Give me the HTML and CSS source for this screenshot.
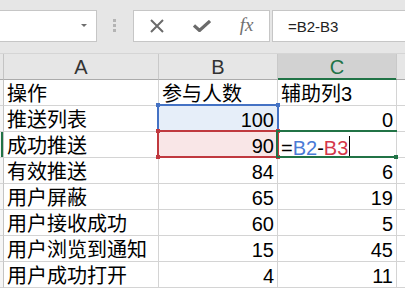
FILE: index.html
```html
<!DOCTYPE html>
<html lang="zh">
<head>
  <meta charset="UTF-8">
  <title>辅助列</title>
  <link rel="stylesheet" href="styles.css">
</head>
<body>

  <div class="bar">
    <div class="namebox"><span class="drop"></span></div>
    <div class="grip"><i></i><i></i><i></i></div>
    <div class="fxbtns">
      <span class="btn">
        <svg width="14" height="14" viewBox="0 0 14 14"><path d="M1 1L13 13M13 1L1 13" stroke="#6b6b6b" stroke-width="2" fill="none"/></svg>
      </span>
      <span class="btn">
        <svg width="18" height="12" viewBox="0 0 18 12"><path d="M1 5.5L6.5 10.5L17 1" stroke="#6b6b6b" stroke-width="3.2" fill="none"/></svg>
      </span>
      <span class="btn fx">fx</span>
    </div>
    <div class="formula">=B2-B3</div>
  </div>

  <div class="sheet">
    <div class="corner"></div>
    <div class="hd">A</div>
    <div class="hd">B</div>
    <div class="hd hd-sel">C</div>
    <div class="hd hd-end"></div>

    <div class="rh"></div>
    <div class="c">操作</div>
    <div class="c">参与人数</div>
    <div class="c">辅助列3</div>
    <div class="c end"></div>

    <div class="rh"></div>
    <div class="c">推送列表</div>
    <div class="c num fill-blue">100<span class="ref ref-blue"><i class="tl"></i><i class="tr"></i><i class="bl"></i><i class="br"></i></span></div>
    <div class="c num">0</div>
    <div class="c end"></div>

    <div class="rh rh-sel"></div>
    <div class="c">成功推送</div>
    <div class="c num fill-red">90<span class="ref ref-red"><i class="tl"></i><i class="tr"></i><i class="bl"></i><i class="br"></i></span></div>
    <div class="c editing">=<span class="r-blue">B2</span>-<span class="r-red">B3</span><span class="caret"></span><span class="act"><i></i></span></div>
    <div class="c end"></div>

    <div class="rh"></div>
    <div class="c">有效推送</div>
    <div class="c num">84</div>
    <div class="c num">6</div>
    <div class="c end"></div>

    <div class="rh"></div>
    <div class="c">用户屏蔽</div>
    <div class="c num">65</div>
    <div class="c num">19</div>
    <div class="c end"></div>

    <div class="rh"></div>
    <div class="c">用户接收成功</div>
    <div class="c num">60</div>
    <div class="c num">5</div>
    <div class="c end"></div>

    <div class="rh"></div>
    <div class="c">用户浏览到通知</div>
    <div class="c num">15</div>
    <div class="c num">45</div>
    <div class="c end"></div>

    <div class="rh"></div>
    <div class="c">用户成功打开</div>
    <div class="c num">4</div>
    <div class="c num">11</div>
    <div class="c end"></div>
  </div>

</body>
</html>
```

FILE: styles.css
```css
html, body {
  margin: 0;
  height: 289px;
  overflow: hidden;
  background: #ffffff;
}

body {
  font-family: 'Liberation Sans', 'Noto Sans CJK SC', sans-serif;
  font-size: 20px;
  color: #000;
}

/* formula bar */
.bar {
  display: flex;
  align-items: flex-start;
  height: 53px;
  padding-top: 10px;
  box-sizing: border-box;
  background: #e6e6e6;
}

.namebox {
  width: 98px;
  height: 32px;
  margin-left: -1px;
  box-sizing: border-box;
  background: #fff;
  border: 1px solid #c6c6c6;
  display: flex;
  justify-content: flex-end;
  align-items: center;
  padding-right: 9px;
  padding-bottom: 2px;
}

.drop {
  width: 0;
  height: 0;
  border-left: 3px solid transparent;
  border-right: 3px solid transparent;
  border-top: 3px solid #6e6e6e;
}

.grip {
  width: 36px;
  padding-left: 16px;
  padding-top: 9px;
  box-sizing: border-box;
  display: flex;
  flex-direction: column;
  gap: 2px;
}

.grip i {
  display: block;
  width: 3px;
  height: 3px;
  background: #b4b4b4;
}

.fxbtns {
  width: 137px;
  height: 32px;
  box-sizing: border-box;
  background: #fff;
  border: 1px solid #c6c6c6;
  display: flex;
}

.btn {
  width: 45px;
  display: flex;
  justify-content: center;
  align-items: center;
}

.btn svg {
  display: block;
}

.fx {
  font-family: 'Liberation Serif', serif;
  font-style: italic;
  font-size: 19px;
  color: #707070;
  padding-bottom: 2px;
}

.formula {
  flex: 1;
  height: 32px;
  margin-left: 2px;
  margin-right: -2px;
  box-sizing: border-box;
  background: #fff;
  border: 1px solid #c6c6c6;
  padding: 1px 0 0 15px;
  font-size: 15px;
  line-height: 29px;
  color: #222;
}

/* sheet grid */
.sheet {
  display: grid;
  grid-template-columns: 4px 155px 119px 119px 1fr;
  grid-auto-rows: 26px;
  height: 236px;
  overflow: hidden;
  border-top: 1px solid #d5d5d5;
  box-sizing: border-box;
}

.sheet > div {
  box-sizing: border-box;
}

.corner {
  background: #e6e6e6;
  border-right: 1px solid #c4c4c4;
  border-bottom: 1px solid #ababab;
}

.hd {
  background: #e6e6e6;
  border-right: 1px solid #c9c9c9;
  border-bottom: 1px solid #ababab;
  text-align: center;
  padding-top: 3px;
  line-height: 20px;
  color: #333;
}

.hd-sel {
  background: #d2d2d2;
  color: #217346;
  border-bottom-color: #217346;
  box-shadow: inset 0 -1px #217346;
}

.hd-end {
  border-right: none;
}

.rh {
  background: #f6f6f6;
  border-right: 1px solid #c4c4c4;
  border-bottom: 1px solid #d4d4d4;
}

.rh-sel {
  box-shadow: inset -2px 0 #217346;
}

.c {
  border-right: 1px solid #d4d4d4;
  border-bottom: 1px solid #d4d4d4;
  padding: 4px 3px 0;
  line-height: 20px;
  white-space: nowrap;
}

.c.end {
  border-right: none;
}

.num {
  text-align: right;
}

.fill-blue,
.fill-red,
.editing {
  position: relative;
}

.fill-blue {
  background: #e6eef9;
}

.fill-red {
  background: #f9e6e7;
}

/* reference boxes while editing */
.ref {
  position: absolute;
  left: -2px;
  right: -2px;
  top: -2px;
  bottom: -1px;
  border: 2px solid currentColor;
  z-index: 1;
}

.ref-blue {
  color: #4472c4;
}

.ref-red {
  color: #c0393f;
}

.ref i {
  position: absolute;
  width: 4px;
  height: 4px;
  background: currentColor;
}

.ref .tl { left: -3px; top: -3px; }
.ref .tr { right: -3px; top: -3px; }
.ref .bl { left: -3px; bottom: -3px; }
.ref .br { right: -3px; bottom: -3px; }

.r-blue {
  color: #4a7bd6;
}

.r-red {
  color: #d4374a;
}

.caret {
  display: inline-block;
  width: 1px;
  height: 22px;
  margin-left: 1px;
  background: #000;
  vertical-align: -3px;
}

.act {
  position: absolute;
  left: -2px;
  right: -1px;
  top: -2px;
  bottom: -1px;
  border: 2px solid #217346;
  border-right: none;
  z-index: 2;
}

.act i {
  position: absolute;
  right: -1px;
  bottom: -3px;
  width: 4px;
  height: 4px;
  background: #217346;
}
```
